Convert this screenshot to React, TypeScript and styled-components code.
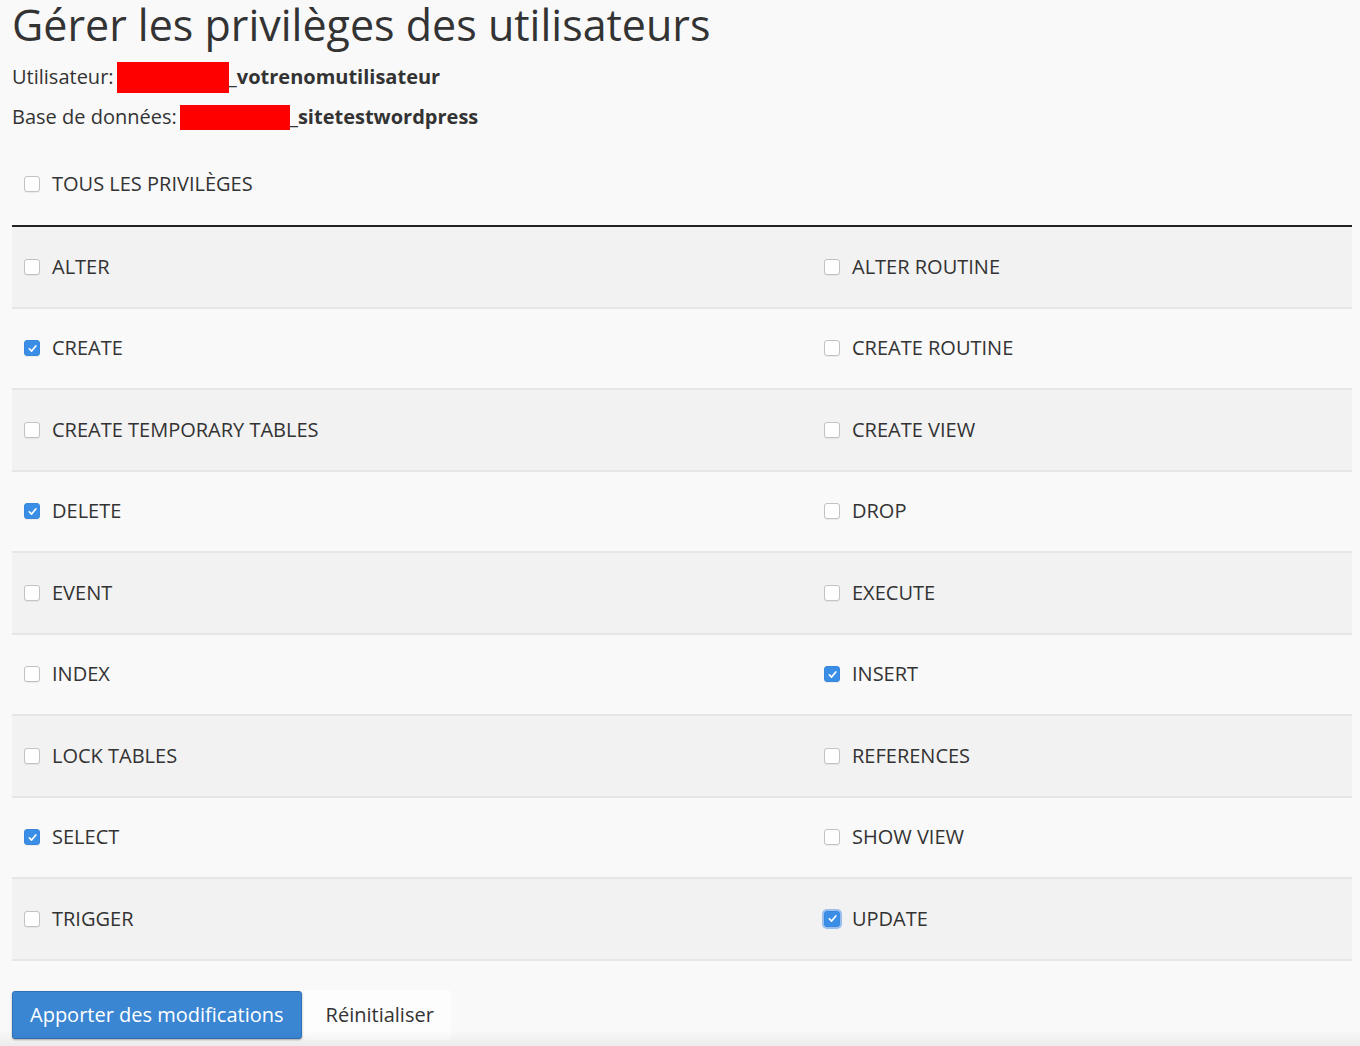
import React from "react";
import styled, { createGlobalStyle } from "styled-components";

const Global = createGlobalStyle`
  html, body { margin: 0; padding: 0; background: #f9f9f9; }
  body { font-family: "Open Sans", "Noto Sans", "Liberation Sans", sans-serif; color: #333; }
`;

const Page = styled.div`
  padding: 0 8px 40px 12px;
`;

const Title = styled.h1`
  margin: 0;
  padding-top: 1px;
  height: 49px;
  font-size: 43px;
  line-height: 48px;
  font-weight: 400;
  color: #333;
`;

const InfoLine = styled.div<{ $first?: boolean }>`
  display: flex;
  align-items: center;
  font-size: 20px;
  line-height: 40px;
  margin-top: ${(p) => (p.$first ? "7px" : "0")};
`;

const Redacted = styled.span<{ $w: number; $h: number }>`
  display: inline-block;
  width: ${(p) => p.$w}px;
  height: ${(p) => p.$h}px;
  background: #ff0000;
  margin-left: 3px;
`;

const Strong = styled.b`
  font-weight: 700;
`;

const AllRow = styled.div`
  padding: 27px 0 21px 12px;
  border-bottom: 2px solid #222;
`;

const Table = styled.div`
  display: flex;
  flex-direction: column;
`;

const Row = styled.div<{ $odd: boolean }>`
  display: grid;
  grid-template-columns: 800px 1fr;
  height: 81.5px;
  box-sizing: border-box;
  border-bottom: 2px solid #e6e6e6;
  background: ${(p) => (p.$odd ? "#f2f2f2" : "#f9f9f9")};
`;

const Cell = styled.label<{ $flush?: boolean }>`
  display: flex;
  align-items: center;
  gap: 12px;
  padding-left: ${(p) => (p.$flush ? "0" : "12px")};
  font-size: 20px;
  line-height: 40px;
  text-transform: uppercase;
  color: #333;
`;

const Box = styled.span<{ $checked: boolean; $focus?: boolean }>`
  width: 16px;
  height: 16px;
  box-sizing: border-box;
  border-radius: 3px;
  display: inline-flex;
  align-items: center;
  justify-content: center;
  flex: none;
  background: ${(p) => (p.$checked ? "#3b8ee6" : "#ffffff")};
  border: 1px solid ${(p) => (p.$checked ? "#3a88dd" : "#c2c2c2")};
  box-shadow: ${(p) => (p.$focus ? "0 0 0 2px rgba(80,150,235,0.55)" : "0 1px 1px rgba(0,0,0,0.06)")};
`;

const Actions = styled.div`
  display: flex;
  align-items: center;
  gap: 2px;
  margin-top: 29px;
`;

const Primary = styled.button`
  height: 48px;
  padding: 0 17px;
  font-family: "Open Sans", "Noto Sans", sans-serif;
  font-size: 20px;
  color: #ffffff;
  background: #3a86d3;
  border: 1px solid #2f72b8;
  border-radius: 3px;
  box-shadow: 0 1px 2px rgba(0, 0, 0, 0.3);
`;

const Secondary = styled.button`
  height: 50px;
  padding: 0 17px 0 22px;
  font-family: "Open Sans", "Noto Sans", sans-serif;
  font-size: 20px;
  color: #333;
  background: #fdfdfd;
  border: none;
  border-radius: 3px;
`;

const BottomFade = styled.div`
  position: fixed;
  left: 0;
  right: 0;
  bottom: 0;
  height: 16px;
  pointer-events: none;
  background: linear-gradient(to bottom, rgba(0, 0, 0, 0), rgba(0, 0, 0, 0.05));
`;

const Check = ({ checked, focus }: { checked: boolean; focus?: boolean }) => (
  <Box $checked={checked} $focus={focus}>
    {checked && (
      <svg width="11" height="11" viewBox="0 0 12 12">
        <path d="M2.5 6.3 L5 8.8 L9.6 3.2" fill="none" stroke="#fff" strokeWidth="1.8" strokeLinecap="round" strokeLinejoin="round" />
      </svg>
    )}
  </Box>
);

type Priv = { name: string; checked: boolean; focus?: boolean };

const rows: [Priv, Priv][] = [
  [{ name: "Alter", checked: false }, { name: "Alter routine", checked: false }],
  [{ name: "Create", checked: true }, { name: "Create routine", checked: false }],
  [{ name: "Create temporary tables", checked: false }, { name: "Create view", checked: false }],
  [{ name: "Delete", checked: true }, { name: "Drop", checked: false }],
  [{ name: "Event", checked: false }, { name: "Execute", checked: false }],
  [{ name: "Index", checked: false }, { name: "Insert", checked: true }],
  [{ name: "Lock tables", checked: false }, { name: "References", checked: false }],
  [{ name: "Select", checked: true }, { name: "Show view", checked: false }],
  [{ name: "Trigger", checked: false }, { name: "Update", checked: true, focus: true }],
];

export default function App() {
  return (
    <>
      <Global />
      <Page>
        <Title>Gérer les privilèges des utilisateurs</Title>
        <InfoLine $first>
          Utilisateur:
          <Redacted $w={112} $h={31} />
          <Strong>_votrenomutilisateur</Strong>
        </InfoLine>
        <InfoLine>
          Base de données:
          <Redacted $w={110} $h={25} />
          <Strong>_sitetestwordpress</Strong>
        </InfoLine>
        <AllRow>
          <Cell $flush>
            <Check checked={false} />
            Tous les privilèges
          </Cell>
        </AllRow>
        <Table>
          {rows.map((r, i) => (
            <Row key={i} $odd={i % 2 === 0}>
              {r.map((p) => (
                <Cell key={p.name}>
                  <Check checked={p.checked} focus={p.focus} />
                  {p.name}
                </Cell>
              ))}
            </Row>
          ))}
        </Table>
        <Actions>
          <Primary>Apporter des modifications</Primary>
          <Secondary>Réinitialiser</Secondary>
        </Actions>
      </Page>
      <BottomFade />
    </>
  );
}
